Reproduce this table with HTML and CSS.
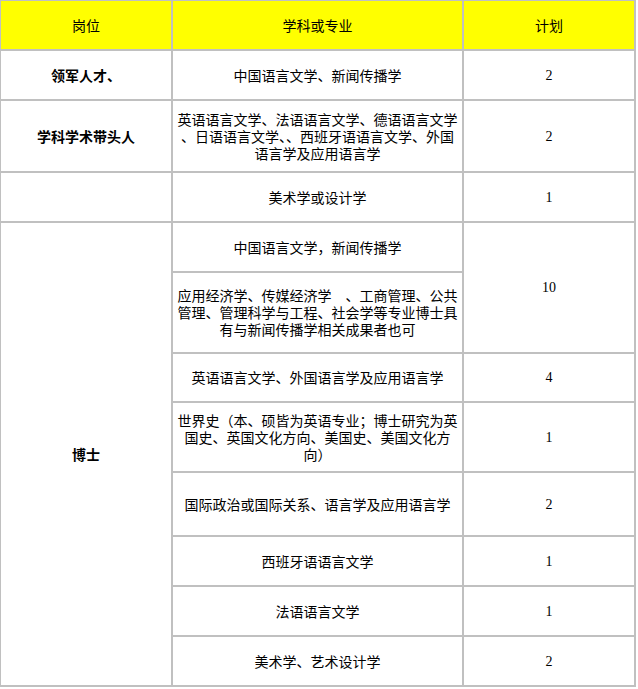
FILE: index.html
```html
<!DOCTYPE html>
<html lang="zh-CN">
<head>
<meta charset="utf-8">
<title>岗位计划</title>
<link rel="stylesheet" href="styles.css">
</head>
<body>
<table class="plan">
  <colgroup>
    <col class="c1">
    <col class="c2">
    <col class="c3">
  </colgroup>
  <thead>
    <tr class="h50">
      <th>岗位</th>
      <th>学科或专业</th>
      <th>计划</th>
    </tr>
  </thead>
  <tbody>
    <tr class="h50">
      <td class="post">领军人才、</td>
      <td>中国语言文学、新闻传播学</td>
      <td class="num">2</td>
    </tr>
    <tr class="h72">
      <td class="post">学科学术带头人</td>
      <td>英语语言文学、法语语言文学、德语语言文学<br>、日语语言文学、、西班牙语语言文学、外国<br>语言学及应用语言学</td>
      <td class="num">2</td>
    </tr>
    <tr class="h50">
      <td class="post"></td>
      <td>美术学或设计学</td>
      <td class="num">1</td>
    </tr>
    <tr class="h50">
      <td class="post" rowspan="8">博士</td>
      <td>中国语言文学，新闻传播学</td>
      <td class="num" rowspan="2">10</td>
    </tr>
    <tr class="h81">
      <td>应用经济学、传媒经济学　、工商管理、公共<br>管理、管理科学与工程、社会学等专业博士具<br>有与新闻传播学相关成果者也可</td>
    </tr>
    <tr class="h49">
      <td>英语语言文学、外国语言学及应用语言学</td>
      <td class="num">4</td>
    </tr>
    <tr class="h70">
      <td>世界史（本、硕皆为英语专业；博士研究为英<br>国史、英国文化方向、美国史、美国文化方<br>向）</td>
      <td class="num">1</td>
    </tr>
    <tr class="h64">
      <td>国际政治或国际关系、语言学及应用语言学</td>
      <td class="num">2</td>
    </tr>
    <tr class="h50">
      <td>西班牙语语言文学</td>
      <td class="num">1</td>
    </tr>
    <tr class="h50">
      <td>法语语言文学</td>
      <td class="num">1</td>
    </tr>
    <tr class="h50">
      <td>美术学、艺术设计学</td>
      <td class="num">2</td>
    </tr>
  </tbody>
</table>
</body>
</html>
```

FILE: styles.css
```css
html, body {
  margin: 0;
  padding: 0;
  background: #ffffff;
}

.plan {
  border-collapse: separate;
  border-spacing: 0;
  table-layout: fixed;
  width: 636px;
  border-right: 1px solid #c0c0c0;
  border-bottom: 1px solid #c0c0c0;
  font-family: "Noto Sans CJK SC", "Liberation Sans", sans-serif;
  font-size: 14px;
  line-height: 17px;
  color: #000000;
}

.c1 { width: 172px; }
.c2 { width: 291px; }
.c3 { width: 172px; }

.plan th,
.plan td {
  border: 1px solid #c0c0c0;
  padding: 0 3px;
  text-align: center;
  vertical-align: middle;
  box-sizing: border-box;
}

.plan th {
  background: #ffff00;
  font-weight: normal;
}

.plan .post {
  font-weight: bold;
}

.plan .num {
  font-family: "Liberation Serif", serif;
  font-size: 14px;
}

.h49 { height: 49px; }
.h50 { height: 50px; }
.h64 { height: 64px; }
.h70 { height: 70px; }
.h72 { height: 72px; }
.h81 { height: 81px; }
```
